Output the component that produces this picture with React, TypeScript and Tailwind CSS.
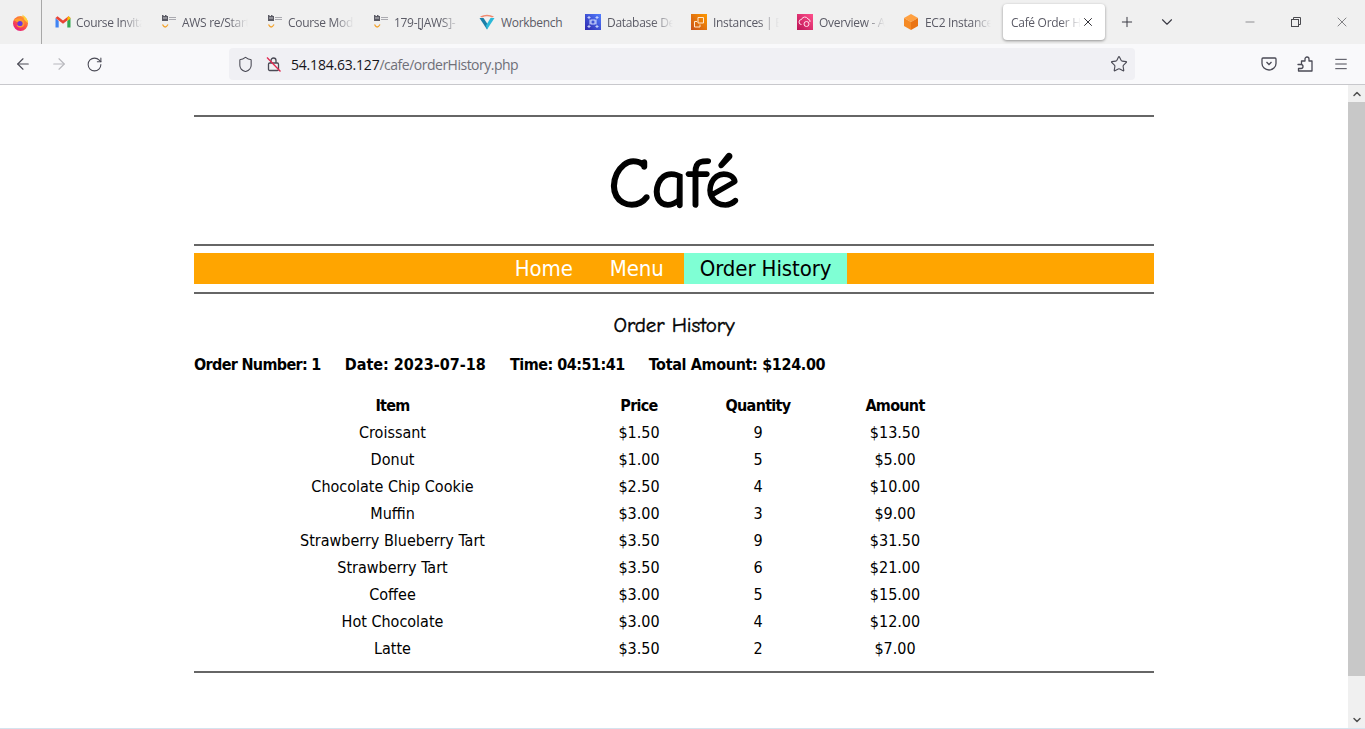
import React from 'react';
import { ArrowLeft, ArrowRight, RotateCw, Shield, Star, Menu, Plus, ChevronDown, X, Minus, ChevronUp } from 'lucide-react';

const FirefoxIcon = () => (
  <svg width="17" height="17" viewBox="0 0 17 17">
    <defs>
      <linearGradient id="ff" x1="0.2" y1="1" x2="0.9" y2="0">
        <stop offset="0" stopColor="#e31587" />
        <stop offset="0.5" stopColor="#ff5a3c" />
        <stop offset="1" stopColor="#ffb52e" />
      </linearGradient>
    </defs>
    <circle cx="8.500" cy="9.500" r="7.500" fill="url(#ff)" />
    <path d="M10 0.500 Q16 4 16 9 L12.500 6 Q11.500 3 10 0.500Z" fill="#ffcf3a" />
    <path d="M1.500 6 Q4 3.500 8 4.500 Q12 5.500 12.500 9.500 Q12 13.500 8 13.500 Q5.500 13.500 4.500 11 Q8 12 9.500 10 Q8 7.500 5 8 Z" fill="#ff9a2e" />
    <circle cx="8" cy="9.500" r="2.600" fill="#6a35d9" />
  </svg>
);

const GmailIcon = () => (
  <svg width="16" height="16" viewBox="0 0 16 16">
    <path d="M0.500 4v9.500h3.200V7z" fill="#4285f4" />
    <path d="M12.300 7v6.500h3.200V4z" fill="#34a853" />
    <path d="M0.500 4 8 9.800 15.500 4 13.500 2.300 8 6.500 2.500 2.300z" fill="#ea4335" />
    <path d="M12.300 3.500v3.600l3.200-2.600V4l-1.800-1.700z" fill="#fbbc04" />
  </svg>
);

const AwsRestartIcon = () => (
  <svg width="16" height="16" viewBox="0 0 16 16">
    <path d="M1 1h1.500v1H4V1h1.500v1H7v5H1z" fill="#5a5a64" />
    <rect x="2" y="3.500" width="4" height="1" fill="#c8c8cc" />
    <rect x="8" y="3" width="7" height="1" fill="#aaaab0" />
    <rect x="8" y="5" width="7" height="1" fill="#aaaab0" />
    <path d="M1.500 10.500 Q4 15.500 7 10.500" fill="none" stroke="#f2a32e" strokeWidth="1.300" />
  </svg>
);

const WorkbenchIcon = () => (
  <svg width="16" height="16" viewBox="0 0 16 16">
    <path d="M0.500 4 L8 15.500 L9.500 11.500 L4.500 4 Z" fill="#1a7fa8" />
    <path d="M15.500 4 L8 15.500 L7 11.500 L11.500 4 Z" fill="#2bb8d8" />
    <path d="M1 2.500 Q8 -1 15 2.500 L13 3.500 Q8 1 3 3.500 Z" fill="#f08a70" />
  </svg>
);

const SquareIcon = ({ from, to, kind }: { from: string; to: string; kind: string }) => (
  <svg width="16" height="16" viewBox="0 0 16 16">
    <defs>
      <linearGradient id={kind} x1="0" y1="1" x2="1" y2="0">
        <stop offset="0" stopColor={from} />
        <stop offset="1" stopColor={to} />
      </linearGradient>
    </defs>
    <rect width="16" height="16" fill={`url(#${kind})`} />
    {kind === 'db' && (
      <path d="M3 3h2v1H3zM11 3h2v1h-2zM3 12h2v1H3zM11 12h2v1h-2zM6 6h4v4H6zM5 5.500v5M11 5.500v5" fill="none" stroke="#dfe6ff" strokeWidth="0.900" />
    )}
    {kind === 'ec2' && <path d="M7 3.500h5.500V9H7zM3.500 7.500H6M3.500 7.500V13H9v-2.500" fill="none" stroke="#ffe8d0" strokeWidth="1" />}
    {kind === 'ov' && (
      <g fill="none" stroke="#ffe0ec" strokeWidth="1">
        <path d="M4.500 10.500a2.500 2.500 0 0 1 0-5 3.500 3.500 0 0 1 6.500-.5 2.500 2.500 0 0 1 2 3" />
        <circle cx="9.500" cy="10" r="2.500" />
      </g>
    )}
  </svg>
);

const CubeIcon = () => (
  <svg width="16" height="16" viewBox="0 0 16 16">
    <path d="M8 0 15 4 8 8 1 4Z" fill="#ffa040" />
    <path d="M1 4 8 8V16L1 12Z" fill="#f58a25" />
    <path d="M15 4 8 8V16L15 12Z" fill="#ea7414" />
  </svg>
);

const PocketIcon = () => (
  <svg width="16" height="16" viewBox="0 0 16 16" fill="none" stroke="#4a4a55" strokeWidth="1.300">
    <path d="M2 2h12a1 1 0 0 1 1 1v4.500a7 6.500 0 0 1-14 0V3a1 1 0 0 1 1-1Z" />
    <path d="M5.500 6 8 8.500 10.500 6" />
  </svg>
);

const ExtensionIcon = () => (
  <svg width="16" height="16" viewBox="0 0 16 16" fill="none" stroke="#4a4a55" strokeWidth="1.300" strokeLinejoin="round">
    <path d="M1 8.500h3.500V5H8V3a2 2 0 0 1 4 0v2h3v10H1.500v-2.500H4a1.500 1.500 0 0 0 0-4Z" />
  </svg>
);

const InsecureLockIcon = () => (
  <svg width="16" height="16" viewBox="0 0 16 16" fill="none">
    <rect x="2.500" y="7" width="10" height="7.500" rx="1.200" stroke="#4a4a55" strokeWidth="1.300" />
    <path d="M5 7V4.500a2.500 2.500 0 0 1 5 0V7" stroke="#4a4a55" strokeWidth="1.300" />
    <path d="M1 1.500 14.500 15.500" stroke="#e22850" strokeWidth="1.300" />
  </svg>
);

const tabs = [
  { title: 'Course Invitation', icon: <GmailIcon /> },
  { title: 'AWS re/Start', icon: <AwsRestartIcon /> },
  { title: 'Course Modules', icon: <AwsRestartIcon /> },
  { title: '179-[JAWS]-', icon: <AwsRestartIcon /> },
  { title: 'Workbench', icon: <WorkbenchIcon /> },
  { title: 'Database Details', icon: <SquareIcon from="#2e27ad" to="#527fff" kind="db" /> },
  { title: 'Instances | EC2', icon: <SquareIcon from="#c8511b" to="#ff9900" kind="ec2" /> },
  { title: 'Overview - AWS', icon: <SquareIcon from="#bc1356" to="#ff4f8b" kind="ov" /> },
  { title: 'EC2 Instances', icon: <CubeIcon /> },
];

const orderItems = [
  ['Croissant', '$1.50', '9', '$13.50'],
  ['Donut', '$1.00', '5', '$5.00'],
  ['Chocolate Chip Cookie', '$2.50', '4', '$10.00'],
  ['Muffin', '$3.00', '3', '$9.00'],
  ['Strawberry Blueberry Tart', '$3.50', '9', '$31.50'],
  ['Strawberry Tart', '$3.50', '6', '$21.00'],
  ['Coffee', '$3.00', '5', '$15.00'],
  ['Hot Chocolate', '$3.00', '4', '$12.00'],
  ['Latte', '$3.50', '2', '$7.00'],
];

const Rule = () => <hr className="border-0 h-0.5 bg-[#666666]" />;

const App: React.FC = () => {
  return (
    <div className="w-[1365px] h-[729px] overflow-hidden flex flex-col bg-white font-['Open_Sans',sans-serif]">
      {/* tab strip */}
      <div className="h-11 bg-[#f0f0f0] flex items-center shrink-0 text-xs">
        <div className="w-[42px] h-11 flex items-center justify-center border-r border-[#a8a8a8] shrink-0">
          <FirefoxIcon />
        </div>
        <div className="flex items-center">
          {tabs.map((tab, i) => (
            <div key={tab.title} className={`w-[106px] pl-[13px] flex items-center shrink-0 ${i >= 4 ? 'gap-1.5' : 'gap-[5px]'}`}>
              <span className="w-4 h-4 shrink-0">{tab.icon}</span>
              <span
                className={`w-[66px] pt-px whitespace-nowrap overflow-hidden text-[#5b5b66] tracking-[-0.3px] ${
                  tab.title === 'Workbench' ? '' : '[mask-image:linear-gradient(to_right,#000_70%,transparent)]'
                }`}
              >
                {tab.title}
              </span>
            </div>
          ))}
        </div>
        <div className="w-[102px] h-9 ml-[7px] bg-white rounded shadow-[0_1px_3px_rgba(0,0,0,0.4)] flex items-center pl-2 shrink-0">
          <span className="w-[70px] pt-px whitespace-nowrap overflow-hidden text-[#5b5b66] tracking-[-0.3px] [mask-image:linear-gradient(to_right,#000_70%,transparent)]">
            Café Order History
          </span>
          <X size={14} strokeWidth={1.5} className="text-[#15141a]" />
        </div>
        <Plus size={16} strokeWidth={1.5} className="ml-[14px] text-[#3a3a44]" />
        <ChevronDown size={18} strokeWidth={1.5} className="ml-[23px] text-[#3a3a44]" />
        <div className="ml-auto flex items-center text-[#4a4a4f]">
          <span className="w-[46px] flex justify-center"><Minus size={14} strokeWidth={1} /></span>
          <span className="w-[46px] flex justify-center">
            <svg width="10" height="10" viewBox="0 0 10 10" fill="none" stroke="currentColor" strokeWidth="1">
              <rect x="0.500" y="2.500" width="7" height="7" />
              <path d="M2.500 2.500V.5h7v7H7.500" />
            </svg>
          </span>
          <span className="w-[46px] flex justify-center"><X size={16} strokeWidth={1} /></span>
        </div>
      </div>

      {/* toolbar */}
      <div className="h-[41px] bg-[#f9f9fb] border-b border-[#c8c8cc] flex items-center shrink-0 text-[#4a4a55]">
        <ArrowLeft size={18} strokeWidth={1.5} className="ml-[14px]" />
        <ArrowRight size={18} strokeWidth={1.5} className="ml-[18px] text-[#b8b8bd]" />
        <RotateCw size={17} strokeWidth={1.5} className="ml-[18px]" />
        <div className="ml-[126px] w-[906px] h-8 bg-[#f0f0f4] rounded flex items-center">
          <Shield size={17} strokeWidth={1.5} className="ml-2" />
          <span className="ml-[12px] w-4 h-4"><InsecureLockIcon /></span>
          <span className="ml-[9px] pt-px text-sm text-[#15141a] tracking-[-0.2px]">
            54.184.63.127<span className="text-[#6f6f78] tracking-[-0.5px]">/cafe/orderHistory.php</span>
          </span>
          <Star size={18} strokeWidth={1.5} className="ml-auto mr-[7px]" />
        </div>
        <span className="ml-[126px] w-4 h-4"><PocketIcon /></span>
        <span className="ml-5 w-4 h-4"><ExtensionIcon /></span>
        <Menu size={16} strokeWidth={1.5} className="ml-5" />
      </div>

      {/* page + scrollbar */}
      <div className="flex-1 flex min-h-0 border-b border-[#d5e3ee]">
        <main className="flex-1 pt-[30px] flex flex-col items-center">
          <div className="w-[960px] text-black font-['DejaVu_Sans_Condensed','DejaVu_Sans',sans-serif] font-stretch-condensed">
            <Rule />
            <h1 className="h-[127px] flex items-center justify-center text-[70px] pt-2 [-webkit-text-stroke:1.5px_black] font-['Comic_Sans_MS','Comic_Neue',cursive]">
              Café
            </h1>
            <Rule />
            <nav className="mt-[7px] mb-2 h-[31px] bg-[#ffa500] pr-0.5 flex justify-center text-[22px] tracking-[-0.1px]">
              <a className="pl-4 pr-[19px] flex items-center text-white">Home</a>
              <a className="pl-[18px] pr-5 flex items-center text-white">Menu</a>
              <a className="px-4 flex items-center text-black bg-[#7fffd4]">Order History</a>
            </nav>
            <Rule />
            <h2 className="mt-[19px] text-center text-[21px] leading-[24px] [-webkit-text-stroke:0.4px_black] font-['Comic_Sans_MS','Comic_Neue',cursive]">
              Order History
            </h2>
            <p className="mt-4 flex gap-6 text-base font-bold leading-[24px]">
              <span className="tracking-[-0.67px]">Order Number: 1</span>
              <span>Date: 2023-07-18</span>
              <span className="tracking-[-0.5px]">Time: 04:51:41</span>
              <span className="tracking-[-0.35px]">Total Amount: $124.00</span>
            </p>
            <div className="mt-[15px] mb-[9px] text-base text-center leading-[27px]">
              <div className="grid grid-cols-[397px_96px_142px_132px] font-bold tracking-[-0.7px]">
                <span>Item</span>
                <span>Price</span>
                <span>Quantity</span>
                <span>Amount</span>
              </div>
              {orderItems.map((row) => (
                <div key={row[0]} className="grid grid-cols-[397px_96px_142px_132px]">
                  {row.map((cell, i) => (
                    <span key={i}>{cell}</span>
                  ))}
                </div>
              ))}
            </div>
            <Rule />
          </div>
        </main>
        <aside className="w-[17px] bg-[#f0f0f0] flex flex-col shrink-0">
          <div className="h-[17px] flex items-center justify-center">
            <ChevronUp size={12} strokeWidth={3} className="text-[#505050]" />
          </div>
          <div className="h-[574px] bg-[#c8c8c8]" />
          <div className="mt-auto h-[17px] flex items-center justify-center">
            <ChevronDown size={12} strokeWidth={3} className="text-[#505050]" />
          </div>
        </aside>
      </div>
    </div>
  );
};

export default App;
